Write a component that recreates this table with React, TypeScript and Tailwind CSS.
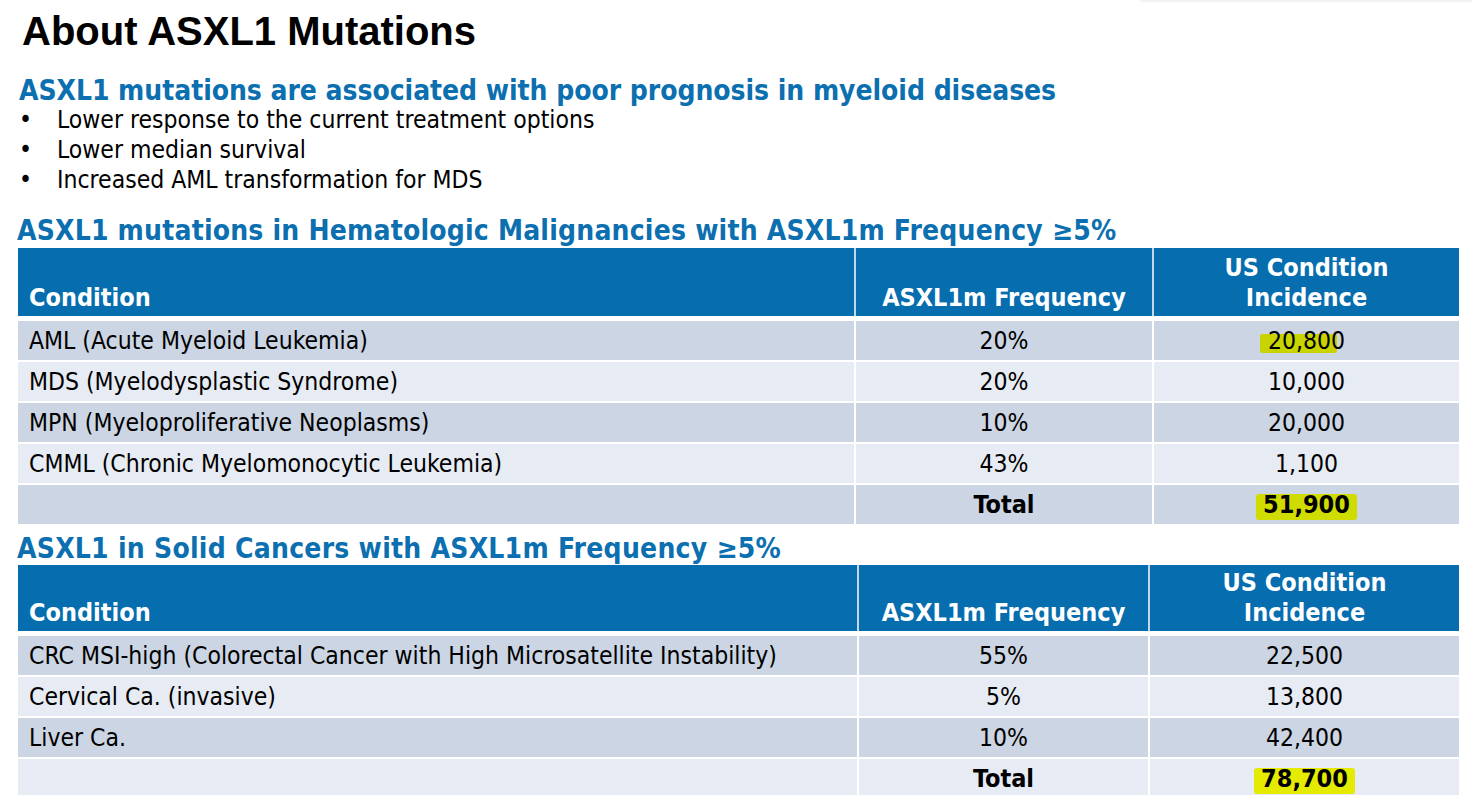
import React from "react";

const BODY = { fontFamily: '"DejaVu Sans Condensed", "DejaVu Sans", sans-serif' };

type Row = { c: string; f: string; n: string };

function Hl({ children, color, cls }: { children: React.ReactNode; color: string; cls: string }) {
  return (
    <span className="relative isolate inline-block">
      <span className={`absolute -z-10 ${cls}`} style={{ backgroundColor: color }} />
      {children}
    </span>
  );
}

function Table({
  cols,
  rows,
  total,
  totalColor,
  top,
  headH,
}: {
  cols: string;
  rows: Row[];
  total: string;
  totalColor: string;
  top?: boolean;
  headH: string;
}) {
  return (
    <div className="ml-[18px] w-[1441px]">
      <div className={`grid ${cols} gap-x-[2px] ${headH} bg-[#c4d6ea]`}>
        <div className="bg-[#066daf] flex items-end pl-[11px] pb-[3px] text-white font-bold text-[25px] leading-[30px]">Condition</div>
        <div className="bg-[#066daf] flex items-end justify-center pb-[3px] text-white font-bold text-[25px] leading-[30px]">ASXL1m Frequency</div>
        <div className="bg-[#066daf] flex flex-col items-center justify-end pb-[3px] text-white font-bold text-[25px] leading-[30px]">
          <span>US Condition</span>
          <span>Incidence</span>
        </div>
      </div>
      <div className="mt-[5px] flex flex-col gap-y-[2px]">
        {rows.map((r, i) => (
          <div key={r.c} className={`grid ${cols} gap-x-[2px] h-[39px] text-[24.5px] leading-[39px] text-black`}>
            <div className={`${i % 2 === 0 ? "bg-[#cbd5e3]" : "bg-[#e7ebf3]"} pl-[11px] whitespace-nowrap`}>{r.c}</div>
            <div className={`${i % 2 === 0 ? "bg-[#cbd5e3]" : "bg-[#e7ebf3]"} text-center`}>{r.f}</div>
            <div className={`${i % 2 === 0 ? "bg-[#cbd5e3]" : "bg-[#e7ebf3]"} text-center`}>
              {top && i === 0 ? (
                <Hl color="#c8d400" cls="left-[-8px] right-[8px] top-[13px] bottom-[7px] rounded-[2px]">{r.n}</Hl>
              ) : (
                r.n
              )}
            </div>
          </div>
        ))}
        <div className={`grid ${cols} gap-x-[2px] h-[39px] text-[25px] leading-[39px] text-black font-bold`}>
          <div className={rows.length % 2 === 0 ? "bg-[#cbd5e3]" : "bg-[#e7ebf3]"} />
          <div className={`${rows.length % 2 === 0 ? "bg-[#cbd5e3]" : "bg-[#e7ebf3]"} text-center`}>Total</div>
          <div className={`${rows.length % 2 === 0 ? "bg-[#cbd5e3]" : "bg-[#e7ebf3]"} text-center`}>
            <Hl color={totalColor} cls="left-[-7px] right-[-7px] top-[9px] bottom-[4px] rounded-[3px]">{total}</Hl>
          </div>
        </div>
      </div>
    </div>
  );
}

export default function App() {
  const t1: Row[] = [
    { c: "AML (Acute Myeloid Leukemia)", f: "20%", n: "20,800" },
    { c: "MDS (Myelodysplastic Syndrome)", f: "20%", n: "10,000" },
    { c: "MPN (Myeloproliferative Neoplasms)", f: "10%", n: "20,000" },
    { c: "CMML (Chronic Myelomonocytic Leukemia)", f: "43%", n: "1,100" },
  ];
  const t2: Row[] = [
    { c: "CRC MSI-high (Colorectal Cancer with High Microsatellite Instability)", f: "55%", n: "22,500" },
    { c: "Cervical Ca. (invasive)", f: "5%", n: "13,800" },
    { c: "Liver Ca.", f: "10%", n: "42,400" },
  ];
  return (
    <div className="w-[1472px] h-[795px] overflow-hidden bg-white relative" style={BODY}>
      <div className="absolute top-0 left-[1140px] right-0 h-[3px] bg-gradient-to-b from-[#eeeeee] to-white" />
      <h1
        className="pl-[22px] pt-[8px] h-[60px] text-[40px] leading-[46px] font-bold text-black"
        style={{ fontFamily: '"Liberation Sans", Arial, sans-serif' }}
      >
        About ASXL1 Mutations
      </h1>
      <h2 className="pl-[19px] mt-[16px] h-[29px] text-[28px] leading-[30px] tracking-[-0.05px] font-bold text-[#0b6fb0] whitespace-nowrap">
        ASXL1 mutations are associated with poor prognosis in myeloid diseases
      </h2>
      <ul className="text-[24.5px] leading-[30px] text-black">
        {["Lower response to the current treatment options", "Lower median survival", "Increased AML transformation for MDS"].map(
          (b) => (
            <li key={b} className="flex h-[30px]">
              <span className="w-[57px] pl-[19px] shrink-0">•</span>
              <span>{b}</span>
            </li>
          )
        )}
      </ul>
      <h2 className="pl-[17px] mt-[21px] h-[32px] text-[28px] leading-[30px] tracking-[0.2px] font-bold text-[#0b6fb0] whitespace-nowrap">
        ASXL1 mutations in Hematologic Malignancies with ASXL1m Frequency ≥5%
      </h2>
      <Table cols="grid-cols-[836px_296px_305px]" rows={t1} total="51,900" totalColor="#d0dc00" top headH="h-[68px]" />
      <h2 className="pl-[17px] mt-[10px] h-[31px] text-[28px] leading-[30px] tracking-[0.25px] font-bold text-[#0b6fb0] whitespace-nowrap">
        ASXL1 in Solid Cancers with ASXL1m Frequency ≥5%
      </h2>
      <Table cols="grid-cols-[839px_289px_309px]" rows={t2} total="78,700" totalColor="#e4ea00" headH="h-[66px]" />
    </div>
  );
}
